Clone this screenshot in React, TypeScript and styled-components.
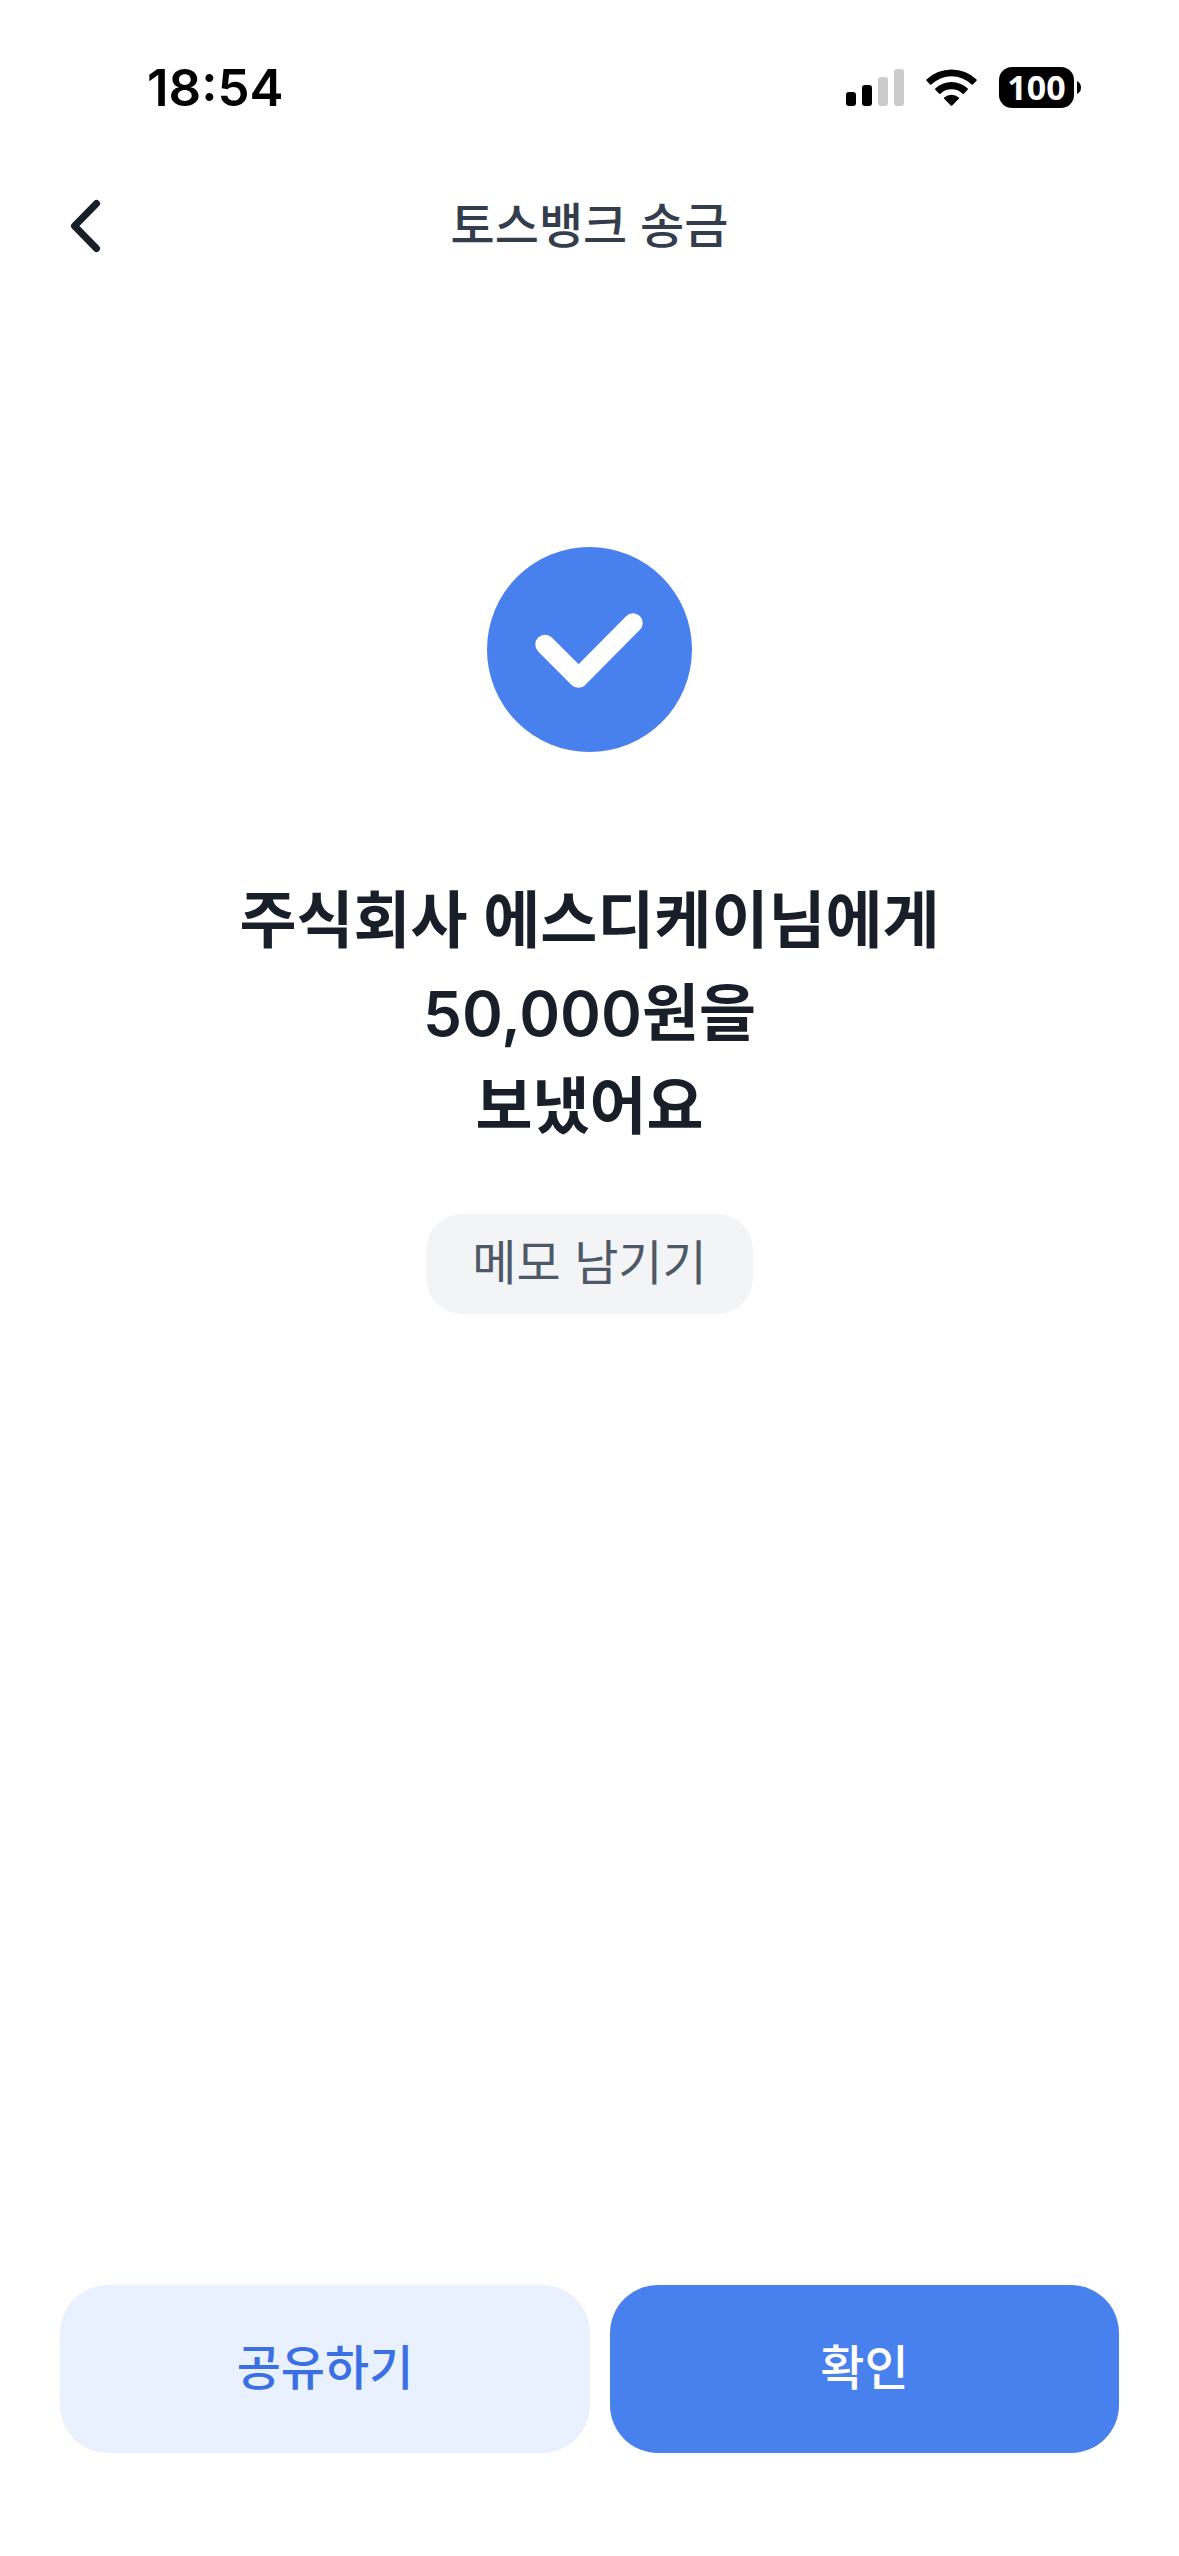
import React from 'react';
import styled, { createGlobalStyle } from 'styled-components';

const GlobalStyle = createGlobalStyle`
  * {
    box-sizing: border-box;
  }
  body {
    margin: 0;
    background: #fff;
    font-family: Inter, 'Noto Sans CJK KR', sans-serif;
  }
  button {
    padding: 0;
    border: 0;
    font-family: inherit;
    font-size: 48px;
    line-height: 72px;
    cursor: pointer;
  }
  svg {
    display: block;
  }
`;

const Page = styled.div`
  display: flex;
  flex-direction: column;
  min-height: 100vh;
`;

const StatusBar = styled.div`
  display: flex;
  align-items: center;
  justify-content: space-between;
  height: 175px;
  padding: 0 98px 0 147px;
`;

const Time = styled.time`
  font-size: 51px;
  line-height: 60px;
  font-weight: 600;
  color: #000;
`;

const Indicators = styled.div`
  display: flex;
  align-items: center;
  gap: 22px;
`;

const Battery = styled.div`
  display: flex;
  align-items: center;
  gap: 3px;
`;

const BatteryLevel = styled.span`
  display: flex;
  align-items: center;
  justify-content: center;
  width: 75px;
  height: 41px;
  border-radius: 13px;
  background: #000;
  color: #fff;
  font-family: 'Noto Sans', sans-serif;
  font-size: 34px;
  line-height: 41px;
  font-weight: 700;
`;

const Header = styled.header`
  display: grid;
  grid-template-columns: 120px 1fr 120px;
  align-items: center;
  height: 102px;
  padding: 0 25px;
`;

const BackButton = styled.button`
  display: flex;
  align-items: center;
  justify-content: center;
  height: 100px;
  background: none;
`;

const Title = styled.h1`
  margin: 0;
  text-align: center;
  font-size: 48px;
  line-height: 72px;
  font-weight: 500;
  color: #333d4b;
`;

const Main = styled.main`
  flex: 1;
  display: flex;
  flex-direction: column;
  align-items: center;
  padding-top: 270px;
`;

const Message = styled.h2`
  margin: 122px 0 0;
  text-align: center;
  font-size: 62px;
  line-height: 93px;
  font-weight: 600;
  color: #191f28;
`;

const Line = styled.span`
  display: block;
`;

const MemoButton = styled.button`
  height: 100px;
  margin-top: 61px;
  padding: 0 46px 2px;
  border-radius: 36px;
  background: #f2f4f6;
  color: #4e5968;
`;

const Footer = styled.footer`
  display: grid;
  grid-template-columns: 530fr 509fr;
  gap: 20px;
  padding: 0 60px 103px;
`;

const ActionButton = styled.button<{ $primary?: boolean }>`
  height: 168px;
  padding-bottom: 2px;
  border-radius: 48px;
  font-weight: 500;
  background: ${(p) => (p.$primary ? '#4880ee' : '#e8f1fd')};
  color: ${(p) => (p.$primary ? '#fff' : '#3a70e4')};
`;

const SignalIcon = () => (
  <svg width="58" height="37" viewBox="0 0 58 37" aria-hidden="true">
    <rect x="0" y="23" width="10" height="14" rx="3" />
    <rect x="16" y="16" width="10" height="21" rx="3" />
    <rect x="32" y="8" width="10" height="29" rx="3" fill="#cbcbcb" />
    <rect x="48" y="0" width="10" height="37" rx="3" fill="#cbcbcb" />
  </svg>
);

const WifiIcon = () => (
  <svg width="51" height="37" viewBox="0 0 51 37" aria-hidden="true">
    <path d="M.5 10.6a36 36 0 0 1 50 0q.6.6 0 1.200l-3.600 3.700q-.6.6-1.200 0a29 29 0 0 0-40.400 0q-.6.6-1.200 0L.5 11.800q-.6-.6 0-1.200z" />
    <path d="M9.300 19.600a23.500 23.500 0 0 1 32.400 0q.6.6 0 1.200l-3.900 3.900q-.6.600-1.200 0a16 16 0 0 0-22.200 0q-.6.6-1.200 0l-3.900-3.900q-.6-.6 0-1.200z" />
    <path d="M18.200 28.400a11 11 0 0 1 14.600 0q.7.6 0 1.300l-6.600 6.800q-.7.7-1.400 0l-6.600-6.800q-.7-.7 0-1.300z" />
  </svg>
);

const BatteryCap = () => (
  <svg width="4" height="13" viewBox="0 0 4 13" aria-hidden="true">
    <path d="M0 0q4 2 4 6.500T0 13z" />
  </svg>
);

const BackIcon = () => (
  <svg width="34" height="54" viewBox="0 0 34 54" fill="none" stroke="#191f28" strokeWidth="7" strokeLinecap="round" strokeLinejoin="round" aria-hidden="true">
    <path d="M28.500 4.500 6.500 27l22 22.500" />
  </svg>
);

const SuccessIcon = () => (
  <svg width="205" height="205" viewBox="0 0 205 205" fill="none" aria-hidden="true">
    <circle cx="102.500" cy="102.500" r="102.500" fill="#4880ee" />
    <path d="m58 97.500 33.500 33.500L146 76" stroke="#fff" strokeWidth="19.500" strokeLinecap="round" strokeLinejoin="round" />
  </svg>
);

export default function App() {
  return (
    <Page>
      <GlobalStyle />
      <StatusBar>
        <Time>18:54</Time>
        <Indicators>
          <SignalIcon />
          <WifiIcon />
          <Battery>
            <BatteryLevel>100</BatteryLevel>
            <BatteryCap />
          </Battery>
        </Indicators>
      </StatusBar>
      <Header>
        <BackButton type="button" aria-label="뒤로">
          <BackIcon />
        </BackButton>
        <Title>토스뱅크 송금</Title>
      </Header>
      <Main>
        <SuccessIcon />
        <Message>
          <Line>주식회사 에스디케이님에게</Line>
          <Line>50,000원을</Line>
          <Line>보냈어요</Line>
        </Message>
        <MemoButton type="button">메모 남기기</MemoButton>
      </Main>
      <Footer>
        <ActionButton type="button">공유하기</ActionButton>
        <ActionButton type="button" $primary>
          확인
        </ActionButton>
      </Footer>
    </Page>
  );
}
